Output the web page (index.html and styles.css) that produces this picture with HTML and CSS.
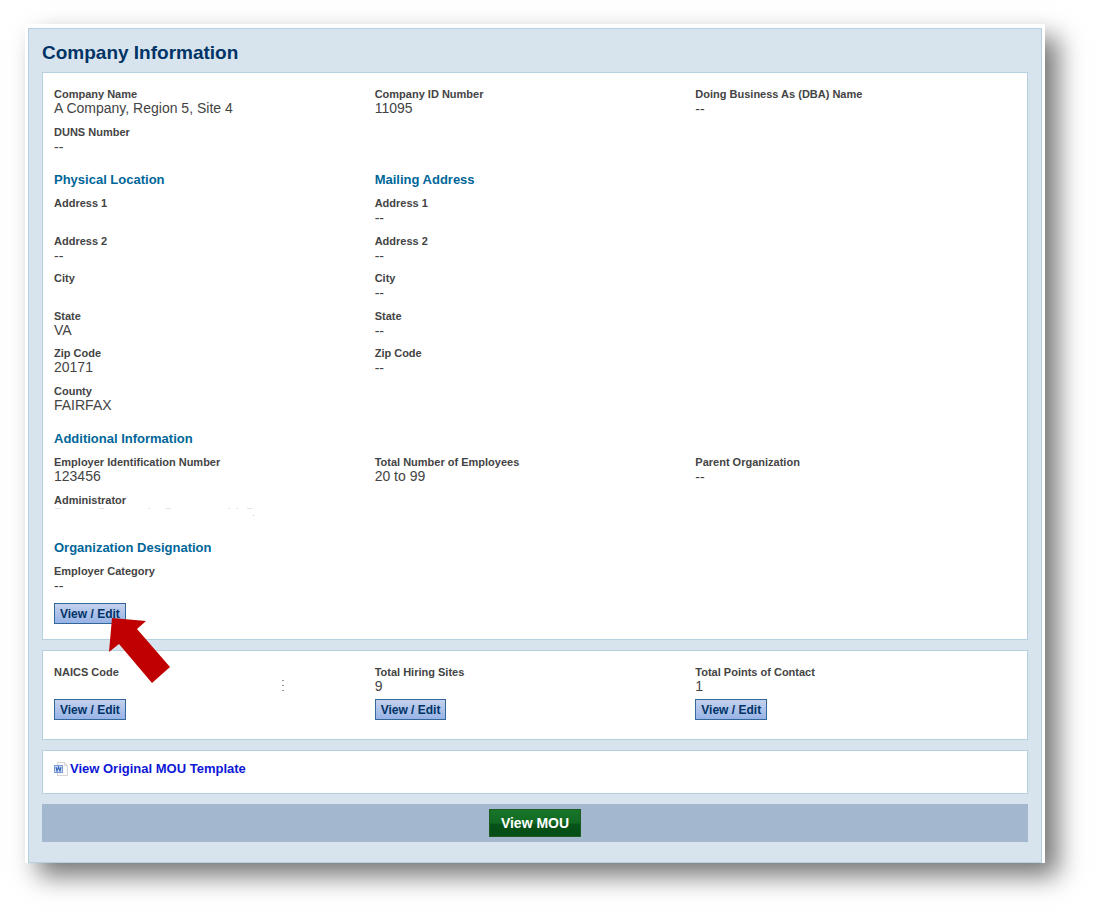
FILE: index.html
```
<!DOCTYPE html>
<html lang="en">
<head>
    <meta charset="UTF-8">
    <meta name="viewport" content="width=device-width, initial-scale=1.0">
    <title>Company Information</title>
    <link rel="stylesheet" href="styles.css">
</head>
<body>
    <div class="frame">
        <main class="panel">
            <h1>Company Information</h1>

            <section class="box">
                <dl class="fields rows-2">
                    <div class="field"><dt>Company Name</dt><dd>A Company, Region 5, Site 4</dd></div>
                    <div class="field"><dt>Company ID Number</dt><dd>11095</dd></div>
                    <div class="field"><dt>Doing Business As (DBA) Name</dt><dd class="empty">--</dd></div>
                    <div class="field"><dt>DUNS Number</dt><dd class="empty">--</dd></div>
                </dl>

                <div class="columns">
                    <div>
                        <h2>Physical Location</h2>
                        <dl class="address">
                            <div class="field"><dt>Address 1</dt><dd></dd></div>
                            <div class="field"><dt>Address 2</dt><dd class="empty">--</dd></div>
                            <div class="field"><dt>City</dt><dd></dd></div>
                            <div class="field"><dt>State</dt><dd>VA</dd></div>
                            <div class="field"><dt>Zip Code</dt><dd>20171</dd></div>
                            <div class="field"><dt>County</dt><dd>FAIRFAX</dd></div>
                        </dl>
                    </div>
                    <div>
                        <h2>Mailing Address</h2>
                        <dl class="address">
                            <div class="field"><dt>Address 1</dt><dd class="empty">--</dd></div>
                            <div class="field"><dt>Address 2</dt><dd class="empty">--</dd></div>
                            <div class="field"><dt>City</dt><dd class="empty">--</dd></div>
                            <div class="field"><dt>State</dt><dd class="empty">--</dd></div>
                            <div class="field"><dt>Zip Code</dt><dd class="empty">--</dd></div>
                        </dl>
                    </div>
                </div>

                <h2>Additional Information</h2>
                <dl class="fields rows-2">
                    <div class="field"><dt>Employer Identification Number</dt><dd>123456</dd></div>
                    <div class="field"><dt>Total Number of Employees</dt><dd>20 to 99</dd></div>
                    <div class="field"><dt>Parent Organization</dt><dd class="empty">--</dd></div>
                    <div class="field">
                        <dt>Administrator</dt>
                        <dd>
                            <svg class="traces" width="204" height="15" viewBox="0 0 204 15" aria-hidden="true">
                                <path d="M1 1.500h6M45 1.500h5M94 1.500h2M112 1.500h5M174 1.500h2M182 1.500h2M193 1.500h5" stroke="#e3e3e3" fill="none"/>
                                <path d="M199 8.500h1" stroke="#9fd0ee" fill="none"/>
                            </svg>
                        </dd>
                    </div>
                </dl>

                <h2>Organization Designation</h2>
                <dl class="fields">
                    <div class="field"><dt>Employer Category</dt><dd class="empty">--</dd></div>
                </dl>
                <div class="action">
                    <button type="button" class="edit-btn">View / Edit</button>
                    <svg class="arrow" width="62" height="66" viewBox="0 0 62 66" aria-hidden="true">
                        <path d="M3 0 37 3 28 11 61 49 43 65 10 26 0 34z" fill="#c00000"/>
                    </svg>
                </div>
            </section>

            <section class="box summary">
                <dl class="fields">
                    <div class="field">
                        <dt>NAICS Code</dt>
                        <dd>
                            <svg class="traces" width="240" height="15" viewBox="0 0 240 15" aria-hidden="true">
                                <path d="M228 1.500h2M228 6.500h2M228 11.500h2" stroke="#8f9aa3" fill="none"/>
                            </svg>
                        </dd>
                        <dd><button type="button" class="edit-btn">View / Edit</button></dd>
                    </div>
                    <div class="field">
                        <dt>Total Hiring Sites</dt>
                        <dd>9</dd>
                        <dd><button type="button" class="edit-btn">View / Edit</button></dd>
                    </div>
                    <div class="field">
                        <dt>Total Points of Contact</dt>
                        <dd>1</dd>
                        <dd><button type="button" class="edit-btn">View / Edit</button></dd>
                    </div>
                </dl>
            </section>

            <section class="box template">
                <a href="#">
                    <svg width="14" height="14" viewBox="0 0 14 14" aria-hidden="true">
                        <path d="M3.500.5h7l3 3v10h-10z" fill="#fafafa" stroke="#d6d6d6"/>
                        <path d="M10.500.5v3h3" fill="none" stroke="#d6d6d6"/>
                        <rect x=".5" y="3.500" width="8" height="7" fill="#d3e0f5" stroke="#7b9cd6"/>
                        <path d="M2 5l1 4 1.500-4L6 9l1-4" fill="none" stroke="#3f6bbd" stroke-width="1.200"/>
                    </svg>
                    <span>View Original MOU Template</span>
                </a>
            </section>

            <div class="footer-bar">
                <button type="button" class="mou-btn">View MOU</button>
            </div>
        </main>
    </div>
</body>
</html>
```

FILE: styles.css
```
* {
    box-sizing: border-box;
}

body {
    margin: 0;
    padding: 24px 52px 50px 25px;
    background-color: #fff;
    color: #444;
    font-family: "Liberation Sans", Arial, sans-serif;
    font-size: 14px;
    line-height: 15px;
}

h1, h2, dl, dd {
    margin: 0;
}

.frame {
    padding: 4px 3px 0;
    background-color: #fff;
    box-shadow: 13px 13px 24px rgba(0, 0, 0, 0.54);
}

.panel {
    padding: 13px 13px 20px;
    background-color: #d8e4ed;
    border: 1px solid #b7d0df;
}

h1 {
    margin-bottom: 8px;
    color: #003366;
    font-size: 19px;
    line-height: 22px;
}

h2 {
    margin: 10px 0 8px;
    color: #006699;
    font-size: 13px;
    line-height: 16px;
}

.box {
    margin-bottom: 10px;
    padding: 14px 11px 15px;
    background-color: #fff;
    border: 1px solid #b7d0df;
}

.fields,
.columns {
    display: grid;
    grid-template-columns: repeat(3, 1fr);
}

.rows-2 {
    grid-auto-rows: 1fr;
    min-height: 75px;
}

.address {
    display: grid;
    grid-template-rows: repeat(6, 1fr);
    min-height: 225px;
}

.field {
    padding-bottom: 6px;
}

dt {
    font-size: 11px;
    font-weight: bold;
    line-height: 14px;
}

dd {
    min-height: 15px;
}

dd.empty {
    padding-top: 1px;
}

.traces {
    display: block;
}

button {
    display: block;
    font-family: inherit;
    font-weight: bold;
    cursor: pointer;
}

.edit-btn {
    height: 21px;
    padding: 0 5px;
    border: 1px solid #336699;
    background: linear-gradient(#c3d1ec, #98b3e6);
    color: #003366;
    font-size: 12px;
    line-height: 18px;
}

.action {
    position: relative;
    width: fit-content;
    margin-top: 3px;
}

/* pointer lying over the first edit button */
.arrow {
    position: absolute;
    left: 55px;
    top: 15px;
}

.summary .field {
    padding-bottom: 4px;
}

.summary .edit-btn {
    margin-top: 5px;
}

.template {
    padding: 10px 11px 14px;
}

.template a {
    display: inline-flex;
    align-items: center;
    gap: 2px;
    color: #0d17d6;
    font-size: 13px;
    font-weight: bold;
    text-decoration: none;
}

.footer-bar {
    display: flex;
    justify-content: center;
    padding: 5px;
    background-color: #a3b8ce;
}

.mou-btn {
    height: 28px;
    padding: 0 11px;
    border: 1px solid #1e5c22;
    background: linear-gradient(#17752a, #126a22 50%, #05521a 55%, #054d14);
    color: #fff;
    font-size: 14px;
}
```
